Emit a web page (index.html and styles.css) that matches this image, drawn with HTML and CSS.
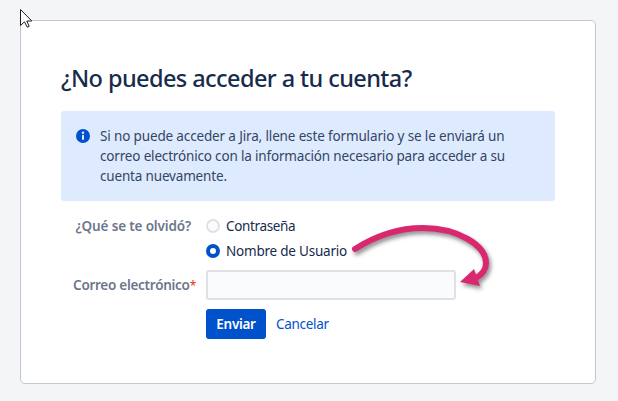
FILE: index.html
```
<!doctype html>
<html lang="es">
<head>
 <meta charset="utf-8">
 <title>¿No puedes acceder a tu cuenta?</title>
 <meta name="viewport" content="width=device-width, initial-scale=1">
 <link rel="stylesheet" href="styles.css">
</head>
<body>
<main class="panel">
 <h1 class="title">¿No puedes acceder a tu cuenta?</h1>
 <div class="message">
  <svg class="info-icon" width="14" height="14" viewBox="0 0 14 14">
   <circle cx="7" cy="7" r="7" fill="#0052cc"/>
   <circle cx="7" cy="3.8" r="1.2" fill="#deebff"/>
   <path d="M7 6.7v3.4" stroke="#deebff" stroke-width="2" stroke-linecap="round"/>
  </svg>
  <p class="message-text">
   <span class="line line1">Si no puede acceder a Jira, llene este formulario y se le enviará un</span>
   <span class="line line2">correo electrónico con la información necesario para acceder a su</span>
   <span class="line line3">cuenta nuevamente.</span>
  </p>
 </div>
 <form class="form">
  <span class="label forgot">¿Qué se te olvidó?</span>
  <div class="options">
   <label class="option"><input class="radio" type="radio" name="forgotten"><span class="password">Contraseña</span></label>
   <label class="option"><input class="radio" type="radio" name="forgotten" checked><span class="username">Nombre de Usuario</span></label>
  </div>
  <label class="label email" for="email">Correo electrónico<span class="required">*</span></label>
  <input class="text" id="email" type="text">
  <div class="buttons">
   <button class="submit" type="button">Enviar</button>
   <a class="cancel" href="#">Cancelar</a>
  </div>
 </form>
</main>
<svg class="arrow" width="160" height="80" viewBox="345 220 160 80">
 <path d="M355 249C380 233 402 228 423 228C459 228 486 246 486 263C486 269 483 274 476 278" fill="none" stroke="#da286f" stroke-width="6" stroke-linecap="round"/>
 <path d="M460 282L474 269L480 286Z" fill="#da286f"/>
</svg>
<svg class="cursor" width="14" height="21" viewBox="0 0 14 21">
 <path d="M.5 .5V16.5L4.5 12.8L7.2 18.2L9.2 17.3L6.8 12H11.8Z" fill="#fff" stroke="#1c1a2c"/>
</svg>
</body>
</html>
```
FILE: styles.css
```
* {box-sizing: border-box;}
body {
  margin: 0;
  padding: 20px 22px 17px 20px;
  height: 401px;
  overflow: hidden;
  background-color: #f4f5f7;
  color: #172b4d;
  font: 13.5px/20px "Noto Sans", "Open Sans", sans-serif;
}
.panel {
  height: 364px;
  padding: 43px 40px 0;
  border: 1px solid #c1c7d0;
  border-radius: 5px;
  background-color: #fff;
}
.title {
  margin: 0;
  font-size: 23.5px;
  font-weight: 500;
  letter-spacing: -.58px;
  line-height: 28px;
  white-space: nowrap;
}
.message {
  display: flex;
  gap: 10px;
  height: 90px;
  margin-top: 19px;
  padding: 15px;
  border-radius: 3px;
  background-color: #deebff;
  color: #344563;
}
.info-icon {margin-top: 3px; flex: none;}
.message-text {margin: 0;}
.line {display: block; white-space: nowrap;}
.line1 {letter-spacing: -.145px;}
.line2, .line3 {letter-spacing: -.17px;}
.form {
  display: grid;
  grid-template-columns: 135px 250px;
  column-gap: 10px;
  margin-top: 15px;
}
.label {
  justify-self: end;
  color: #6b778c;
  font-weight: 600;
  white-space: nowrap;
}
.forgot {margin-right: 5px; letter-spacing: -.15px;}
.email {
  margin-top: 9px;
  padding-top: 5px;
  letter-spacing: -.27px;
}
.required {color: #de350b; font-size: 12px; font-weight: 400;}
.options {display: grid; row-gap: 5px;}
.option {display: flex; align-items: center; gap: 6px; white-space: nowrap;}
.password {letter-spacing: -.35px;}
.username {letter-spacing: -.22px;}
.radio {
  appearance: none;
  width: 14px;
  height: 14px;
  margin: 0;
  border: 2px solid #dfe1e6;
  border-radius: 50%;
  background-color: #fafbfc;
}
.radio:checked {border: 4px solid #0052cc; background-color: #fff;}
.text {
  height: 30px;
  margin-top: 9px;
  padding: 4px 5px;
  border: 2px solid #dfe1e6;
  border-radius: 3px;
  background-color: #fafbfc;
  font: inherit;
}
.buttons {
  grid-column: 2;
  display: flex;
  align-items: center;
  gap: 10px;
  margin-top: 9px;
}
.submit {
  width: 60px;
  height: 30px;
  padding: 0;
  border: 0;
  border-radius: 3px;
  background-color: #0052cc;
  color: #fff;
  font: inherit;
  font-weight: 600;
  letter-spacing: -.3px;
}
.cancel {
  color: #0052cc;
  letter-spacing: -.3px;
  text-decoration: none;
}
.arrow {
  position: absolute;
  left: 345px;
  top: 220px;
  filter: drop-shadow(2px 3px 2px rgba(0, 0, 0, .45));
}
.cursor {position: absolute; left: 20px; top: 9px;}
```
